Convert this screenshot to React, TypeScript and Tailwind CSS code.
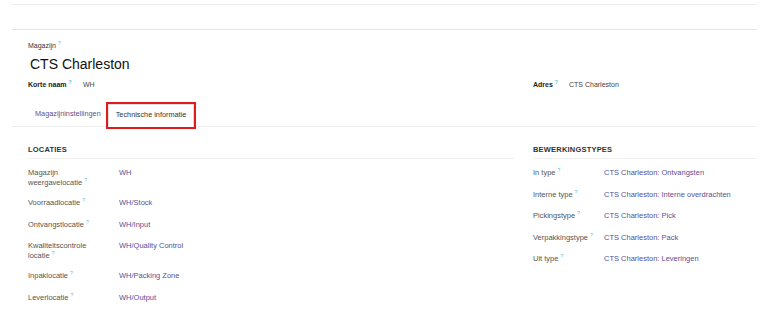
const Q = () => (
  <span className="ml-[2px] text-[5px] leading-none text-[#5bbcd8] relative -top-[3px]">?</span>
);

const locaties: [string, string][] = [
  ["Magazijn weergavelocatie", "WH"],
  ["Voorraadlocatie", "WH/Stock"],
  ["Ontvangstlocatie", "WH/Input"],
  ["Kwaliteitscontrole locatie", "WH/Quality Control"],
  ["Inpaklocatie", "WH/Packing Zone"],
  ["Leverlocatie", "WH/Output"],
];

const types: [string, string][] = [
  ["In type", "CTS Charleston: Ontvangsten"],
  ["Interne type", "CTS Charleston: Interne overdrachten"],
  ["Pickingstype", "CTS Charleston: Pick"],
  ["Verpakkingstype", "CTS Charleston: Pack"],
  ["Uit type", "CTS Charleston: Leveringen"],
];

function Group({ title, rows, labelW, width }: { title: string; rows: [string, string][]; labelW: string; width: string }) {
  return (
    <div className={width}>
      <div className="text-[7.5px] font-bold text-[#333] tracking-[0.2px] leading-[10px] pb-[3px] border-b border-[#f0f0f0]">{title}</div>
      <div className="pt-[9px] flex flex-col gap-[10px]">
        {rows.map(([l, v]) => (
          <div key={l} className="flex min-h-[11.5px] text-[7.5px] leading-[10px]">
            <div className={`${labelW} shrink-0 text-[#555] pr-[22px]`}>
              {l}
              <Q />
            </div>
            <div className="text-[#5a4f96]">{v}</div>
          </div>
        ))}
      </div>
    </div>
  );
}

export default function App() {
  return (
    <div className="w-[771px] h-[334px] bg-white overflow-hidden" style={{ fontFamily: '"Liberation Sans", Arial, sans-serif' }}>
      <div className="mx-[12px] w-[745px] h-[5px] border-b border-[#ececec]" />
      <div className="mx-[12px] w-[745px] mt-[24px] border-t border-[#e4e4e4]">
        <div className="pl-[16px] pt-[11px]">
          <div className="text-[7px] text-[#333] leading-[9px]">
            Magazijn
            <Q />
          </div>
          <div className="text-[14px] text-[#111] leading-[20px] ml-[2px] mt-[4px]">CTS Charleston</div>
          <div className="flex mt-[6px] text-[7px] leading-[10px]">
            <div className="w-[505px] flex">
              <div className="w-[55px] font-bold text-[#222]">
                Korte naam
                <Q />
              </div>
              <div className="text-[#444]">WH</div>
            </div>
            <div className="flex">
              <div className="w-[36px] font-bold text-[#222]">
                Adres
                <Q />
              </div>
              <div className="text-[#444]">CTS Charleston</div>
            </div>
          </div>
        </div>
        <div className="mt-[14px] flex items-end border-b border-[#eeeeee] pl-[19px] h-[23px]">
          <div className="px-[4px] text-[7.3px] text-[#6b4f7f] pb-[6px]">Magazijninstellingen</div>
          <div className="ml-[3px] h-[23px] outline-[2px] outline outline-[#e01b1b] border border-[#dcdcdc] border-b-white bg-white text-[7.3px] text-[#333] flex items-center px-[7px] -mb-[1px]">
            Technische informatie
          </div>
        </div>
        <div className="flex pl-[16px] pt-[18px]">
          <Group title="LOCATIES" rows={locaties} labelW="w-[91px]" width="w-[487px]" />
          <div className="w-[18px]" />
          <Group title="BEWERKINGSTYPES" rows={types} labelW="w-[71px]" width="w-[224px]" />
        </div>
      </div>
    </div>
  );
}
